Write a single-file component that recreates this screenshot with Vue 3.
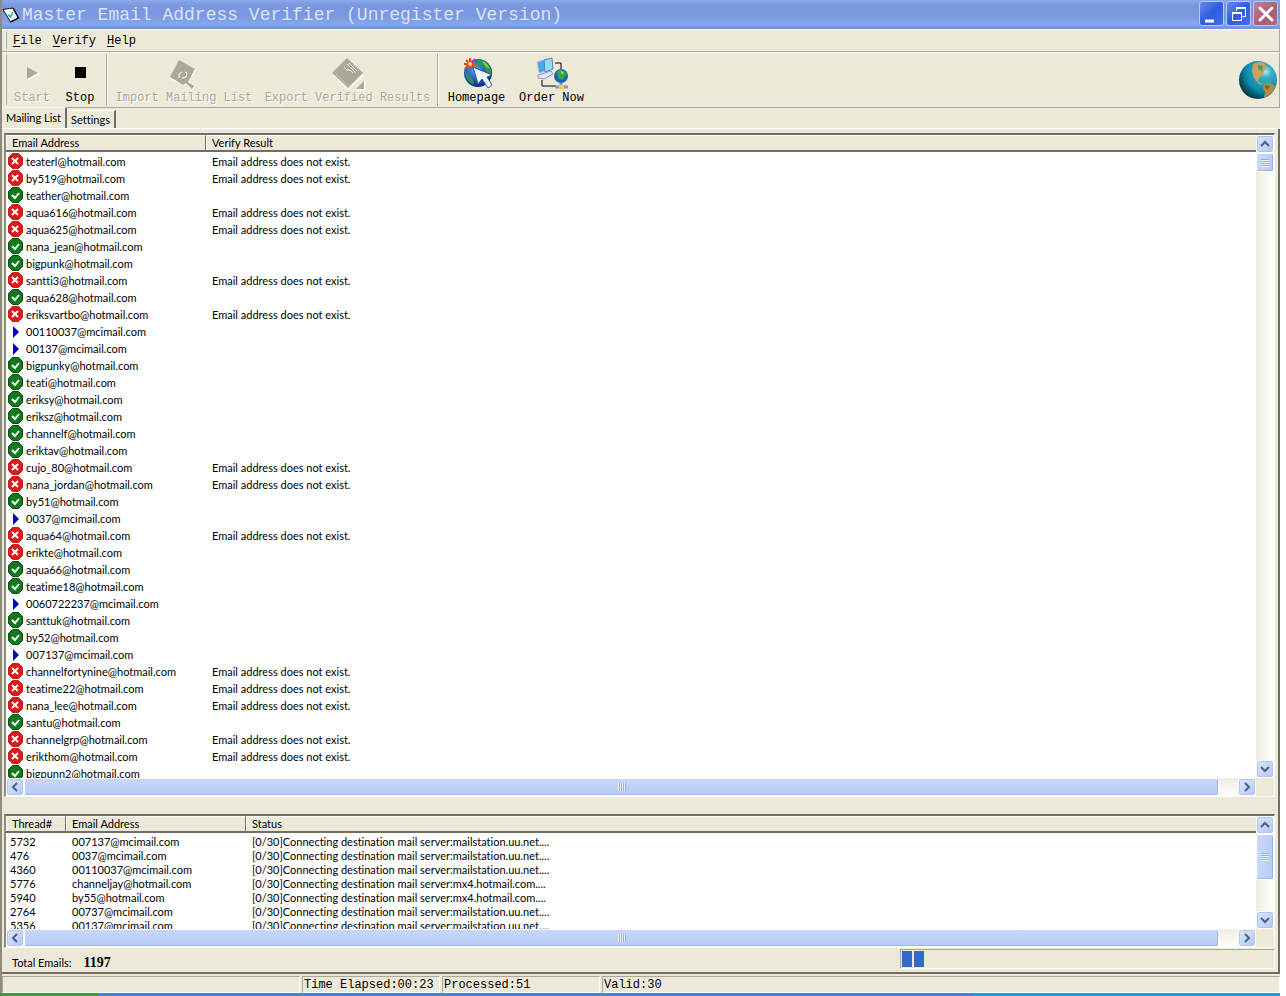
<script setup>
const bad = 'Email address does not exist.'
const src = `x teaterl@hotmail.com
x by519@hotmail.com
v teather@hotmail.com
x aqua616@hotmail.com
x aqua625@hotmail.com
v nana_jean@hotmail.com
v bigpunk@hotmail.com
x santti3@hotmail.com
v aqua628@hotmail.com
x eriksvartbo@hotmail.com
p 00110037@mcimail.com
p 00137@mcimail.com
v bigpunky@hotmail.com
v teati@hotmail.com
v eriksy@hotmail.com
v eriksz@hotmail.com
v channelf@hotmail.com
v eriktav@hotmail.com
x cujo_80@hotmail.com
x nana_jordan@hotmail.com
v by51@hotmail.com
p 0037@mcimail.com
x aqua64@hotmail.com
x erikte@hotmail.com -
v aqua66@hotmail.com
v teatime18@hotmail.com
p 0060722237@mcimail.com
v santtuk@hotmail.com
v by52@hotmail.com
p 007137@mcimail.com
x channelfortynine@hotmail.com
x teatime22@hotmail.com
x nana_lee@hotmail.com
v santu@hotmail.com
x channelgrp@hotmail.com
x erikthom@hotmail.com
v bigpunn2@hotmail.com`
const emails = src.split('\n').map((line) => {
  const [state, address, silent] = line.trim().split(' ')
  return { state, address, result: state === 'x' && !silent ? bad : '' }
})
const station = '[0/30]Connecting destination mail server:mailstation.uu.net....'
const mx4 = '[0/30]Connecting destination mail server:mx4.hotmail.com....'
const threads = [
  { id: '5732', address: '007137@mcimail.com', status: station },
  { id: '476', address: '0037@mcimail.com', status: station },
  { id: '4360', address: '00110037@mcimail.com', status: station },
  { id: '5776', address: 'channeljay@hotmail.com', status: mx4 },
  { id: '5940', address: 'by55@hotmail.com', status: mx4 },
  { id: '2764', address: '00737@mcimail.com', status: station },
  { id: '5356', address: '00137@mcimail.com', status: station },
]
const chevrons = {
  up: 'M4 10l4-4 4 4',
  down: 'M4 6l4 4 4-4',
  left: 'M10 4l-4 4 4 4',
  right: 'M6 4l4 4-4 4',
}
</script>

<template>
  <div class="screen">
    <div class="window">
      <header class="title">
        <svg class="app-icon" width="18" height="20" viewBox="0 0 18 20">
          <path d="M1 5.500l10-1.500 5.500 10-8 4z" fill="#fff" stroke="#101820" stroke-width="1" />
          <path d="M11 4l5.500 10-8 4" fill="none" stroke="#101820" stroke-width="1.500" />
          <path d="M6 10.500l2.500 2.500 2.500-5" fill="none" stroke="#2a9fd8" stroke-width="1.600" />
        </svg>
        <h1>Master Email Address Verifier (Unregister Version)</h1>
        <button class="cap" aria-label="Minimize">
          <svg width="22" height="22" viewBox="0 0 22 22"><path d="M4 18h9" stroke="#fff" stroke-width="3" /></svg>
        </button>
        <button class="cap" aria-label="Restore">
          <svg width="22" height="22" viewBox="0 0 22 22" fill="none" stroke="#fff">
            <path d="M8.500 8V5.500h9v8h-3" /><path d="M8 5h10" stroke-width="2" />
            <path d="M4.500 9.500h9v8h-9z" /><path d="M4 10h10" stroke-width="2" />
          </svg>
        </button>
        <button class="cap close" aria-label="Close">
          <svg width="22" height="22" viewBox="0 0 22 22"><path d="M5 5l12 12M17 5L5 17" stroke="#fff" stroke-width="3" stroke-linecap="round" /></svg>
        </button>
      </header>

      <nav class="menu">
        <span class="grip"></span>
        <button><u>F</u>ile</button>
        <button><u>V</u>erify</button>
        <button><u>H</u>elp</button>
      </nav>

      <div class="toolbar">
        <span class="grip"></span>
        <button class="tool w48" disabled>
          <svg width="36" height="36" viewBox="0 0 36 36"><path d="M14 12l12 6-12 6z" fill="#fff" /><path d="M13 11l11 6-11 6z" fill="#aca899" /></svg>
          <span>Start</span>
        </button>
        <button class="tool w48">
          <svg width="36" height="36" viewBox="0 0 36 36"><path d="M13 11h11v11H13z" /></svg>
          <span>Stop</span>
        </button>
        <span class="sep"></span>
        <button class="tool w152" disabled>
          <svg width="36" height="36" viewBox="0 0 36 36">
            <path d="M14 5l16 9-7 12 6 5-2 3-6-6-3 2-14-7z" fill="#fff" />
            <path d="M13 4l16 9-7 13 6 4-2 3-6-6-3 2-13-8z" fill="#aca899" />
            <path d="M13 22v-4l3-2M16 22l4-1 1-4-2-1" fill="none" stroke="#fff" />
          </svg>
          <span>Import Mailing List</span>
        </button>
        <button class="tool w175" disabled>
          <svg width="36" height="36" viewBox="0 0 36 36">
            <path d="M27 34l8-9v9z" fill="#fff" stroke="#fff" />
            <path d="M3 18l15 15 15-14" fill="none" stroke="#fff" stroke-width="2" />
            <path d="M17 2l16 15-15 15L2 17z" fill="#aca899" />
            <path d="M26 33l8-8v8z" fill="#aca899" />
            <path d="M14 11l3 3h3l3 3M17 8l9 9M19 7l8 8M22 6l6 6" fill="none" stroke="#f4f2e6" />
            <path d="M6 18l12 12" stroke="#c8c4b4" />
          </svg>
          <span>Export Verified Results</span>
        </button>
        <span class="sep"></span>
        <button class="tool w75">
          <svg width="36" height="36" viewBox="0 0 36 36">
            <defs>
              <radialGradient id="earth" cx="40%" cy="35%" r="65%">
                <stop offset="0" stop-color="#4aa4f0" /><stop offset=".6" stop-color="#1a5cc4" /><stop offset="1" stop-color="#0c2c7c" />
              </radialGradient>
            </defs>
            <circle cx="19" cy="17" r="14" fill="url(#earth)" />
            <path d="M18 4q9-1 13 7 2 4 1 9l-5-5-3-6-5 2z" fill="#2a9c3c" />
            <path d="M23 5q6 2 8 8l-4-2z" fill="#7cc850" />
            <path d="M6 15q5 3 8 9l1 5q-9-4-9-14z" fill="#2f8c58" />
            <path d="M11 2v12M5 8h13M7 4l9 9M16 3l-10 10" stroke="#e2452a" stroke-width="2" />
            <circle cx="11" cy="8" r="2" fill="#ffe08a" />
            <path d="M14 11l5 17 4-5 6 9 4-3-5-8 5-2z" fill="#eef4ff" stroke="#37588c" />
          </svg>
          <span>Homepage</span>
        </button>
        <button class="tool w75">
          <svg width="36" height="36" viewBox="0 0 36 36">
            <path d="M21 7h6v6M8 24v6h14" fill="none" stroke="#000" />
            <path d="M4 19l13-4 2 3-9 5-6-1z" fill="#e2e4f2" stroke="#9098b8" />
            <path d="M3 6l10-3 2 11-10 3z" fill="#48a8ec" stroke="#b8c4e4" />
            <path d="M10 4l8-2 1 11-8 3z" fill="#8cdcfc" stroke="#647fb8" />
            <circle cx="27" cy="20" r="7" fill="#1c62b8" />
            <path d="M23 15q6-3 10 3-2 2-4 6-4 0-5-3z" fill="#35a445" />
            <path d="M26 15l4 1-2 3z" fill="#8cd46c" />
            <path d="M21 31h13M27 27v4" stroke="#8c9ab8" stroke-width="3" />
            <path d="M25 29h5v4h-5z" fill="#f0cf50" />
          </svg>
          <span>Order Now</span>
        </button>
        <svg class="globe" width="38" height="38" viewBox="0 0 38 38">
          <defs>
            <radialGradient id="sea" cx="70%" cy="28%" r="80%">
              <stop offset="0" stop-color="#a8ecf2" /><stop offset=".2" stop-color="#35b0c8" /><stop offset=".65" stop-color="#0a8aa8" /><stop offset="1" stop-color="#04303c" />
            </radialGradient>
          </defs>
          <circle cx="19" cy="19" r="19" fill="url(#sea)" />
          <path d="M14 3q5-3 11-1l3 5-3 3-2 5-3 2-1 3 3 2 3 2-5-1-5-6-2-7z" fill="#c8a25c" />
          <path d="M19 4l5 1-1 5-4-2z" fill="#4b9a6a" />
          <path d="M25 23l6-1 5 3-2 5-5 5-4 2 1-6-2-4z" fill="#b98740" /><path d="M26 24l5 1-2 4-3-2z" fill="#5a7a38" />
        </svg>
      </div>

      <div class="tabs" role="tablist">
        <button class="tab on" role="tab" aria-selected="true">Mailing List</button>
        <button class="tab" role="tab" aria-selected="false">Settings</button>
      </div>

      <main class="page">
        <section class="list mail">
          <div class="view">
            <table>
              <colgroup><col class="c200" /><col /></colgroup>
              <thead><tr><th>Email Address</th><th>Verify Result</th></tr></thead>
              <tbody>
                <tr v-for="m in emails" :key="m.address">
                  <td>
                    <div class="entry">
                      <svg width="17" height="17" viewBox="0 0 17 17">
                        <path v-if="m.state === 'p'" d="M6 3l6 6-6 6z" fill="#0000c8" />
                        <g v-else>
                          <path d="M5.500 .500h6l4 4v7l-4 4h-6l-4-4v-7z" stroke-linejoin="round" :fill="m.state === 'x' ? '#e01818' : '#0e7a1c'" :stroke="m.state === 'x' ? '#c02424' : '#0a4c10'" />
                          <path :d="m.state === 'x' ? 'M5 5l6 6M11 5l-6 6' : 'M5 8l3 3 4-5'" fill="none" stroke="#fff" stroke-width="2" />
                        </g>
                      </svg>
                      {{ m.address }}
                    </div>
                  </td>
                  <td>{{ m.result }}</td>
                </tr>
              </tbody>
            </table>
          </div>
          <div class="vbar">
            <button class="sb" aria-label="Scroll up"><svg width="16" height="16" viewBox="0 0 16 16"><path :d="chevrons.up" /></svg></button>
            <span class="thumb small"></span>
            <span class="fill"></span>
            <button class="sb" aria-label="Scroll down"><svg width="16" height="16" viewBox="0 0 16 16"><path :d="chevrons.down" /></svg></button>
          </div>
          <div class="hbar">
            <button class="sb" aria-label="Scroll left"><svg width="16" height="16" viewBox="0 0 16 16"><path :d="chevrons.left" /></svg></button>
            <span class="thumb"></span>
            <button class="sb" aria-label="Scroll right"><svg width="16" height="16" viewBox="0 0 16 16"><path :d="chevrons.right" /></svg></button>
          </div>
        </section>

        <section class="list jobs">
          <div class="view">
            <table>
              <colgroup><col class="c60" /><col class="c180" /><col /></colgroup>
              <thead><tr><th>Thread#</th><th>Email Address</th><th>Status</th></tr></thead>
              <tbody>
                <tr v-for="t in threads" :key="t.id">
                  <td>{{ t.id }}</td><td>{{ t.address }}</td><td>{{ t.status }}</td>
                </tr>
              </tbody>
            </table>
          </div>
          <div class="vbar">
            <button class="sb" aria-label="Scroll up"><svg width="16" height="16" viewBox="0 0 16 16"><path :d="chevrons.up" /></svg></button>
            <span class="thumb large"></span>
            <span class="fill"></span>
            <button class="sb" aria-label="Scroll down"><svg width="16" height="16" viewBox="0 0 16 16"><path :d="chevrons.down" /></svg></button>
          </div>
          <div class="hbar">
            <button class="sb" aria-label="Scroll left"><svg width="16" height="16" viewBox="0 0 16 16"><path :d="chevrons.left" /></svg></button>
            <span class="thumb"></span>
            <button class="sb" aria-label="Scroll right"><svg width="16" height="16" viewBox="0 0 16 16"><path :d="chevrons.right" /></svg></button>
          </div>
        </section>

        <div class="totals">
          <span>Total Emails:</span><b>1197</b>
          <div class="progress" role="progressbar" aria-label="Verification progress"><i></i><i></i></div>
        </div>
      </main>

      <footer class="status">
        <span class="s298"></span><span class="s138">Time Elapsed:00:23</span><span class="s158">Processed:51</span><span class="rest">Valid:30</span>
      </footer>
    </div>
    <div class="taskbar"><span></span><span></span><span></span></div>
  </div>
</template>

<style>
html, body { background: #fff; }
</style>
<style scoped>
* { box-sizing: border-box; }
button { font: inherit; color: inherit; background: none; border: 0; padding: 0; }
svg { display: block; flex: none; }
.screen { height: 100vh; padding-right: 6px; display: flex; flex-direction: column; font: 11px/14px Lato, "Liberation Sans", sans-serif; font-variant-ligatures: none; color: #000; overflow: hidden; }
.window { flex: 1; min-height: 0; display: flex; flex-direction: column; background: #ece9d8; border-left: 2px solid #8d8b7d; }
.title { height: 29px; flex: none; display: flex; align-items: center; gap: 2px; padding-right: 2px; background: linear-gradient(#8aa7e8 0, #7a96df 6px, #7b98e0 16px, #84a8ec 24px, #6f8fd4 29px); }
.app-icon { margin-bottom: 2px; }
h1 { flex: 1; margin: 0; font: 18px/24px "Liberation Mono", monospace; color: #d8e4f8; white-space: nowrap; }
.cap { width: 25px; height: 25px; margin-bottom: 2px; border: 1px solid #b4c8f4; border-radius: 3px; background: linear-gradient(135deg, #6a8cf0, #2f5ce0 50%, #4470ea); display: flex; align-items: center; justify-content: center; }
.close { background: linear-gradient(135deg, #c08098, #a85c70 60%, #b46c80); }
.menu, .toolbar, .status { font-family: "Liberation Mono", monospace; font-size: 12px; }
.menu { height: 23px; flex: none; display: flex; align-items: center; gap: 11px; padding: 0 3px; border-top: 1px solid #fff; border-bottom: 1px solid #aca899; border-right: 1px solid #aca899; }
.menu .grip { margin-right: -5px; }
u { text-underline-offset: 2px; }
.grip { width: 2px; align-self: stretch; margin: 2px 0; border-right: 1px solid #aca899; border-left: 1px solid #fff; }
.toolbar { height: 56px; flex: none; display: flex; align-items: center; padding: 0 2px; border-top: 1px solid #fff; border-bottom: 1px solid #aca899; border-right: 1px solid #aca899; }
.toolbar .grip { margin-left: 1px; margin-right: 1px; }
.tool { display: flex; flex-direction: column; align-items: center; white-space: nowrap; }
.tool span { line-height: 13px; }
.tool:disabled { color: #aca899; text-shadow: 1px 1px #fff; }
.w48 { width: 48px; } .w152 { width: 152px; } .w175 { width: 175px; } .w75 { width: 75px; }
.sep { width: 2px; align-self: stretch; margin: 1px 0 1px 2px; border-left: 1px solid #aca899; border-right: 1px solid #fff; }
.globe { margin-left: auto; }
.tabs { height: 21px; flex: none; display: flex; align-items: flex-end; border-bottom: 1px solid #fff; }
.tab { width: 49px; height: 18px; border-right: 2px solid #716f64; border-top: 1px solid #fff; white-space: nowrap; }
.tab.on { width: 65px; height: 21px; }
.page { flex: 1; min-height: 0; display: flex; flex-direction: column; padding: 4px 3px 2px 2px; border-right: 2px solid #716f64; border-bottom: 2px solid #716f64; }
.list { display: grid; grid-template-columns: 1fr 18px; grid-template-rows: 1fr 18px; border: 1px solid #fff; border-top: 2px solid #716f64; border-left: 2px solid #8d8b7d; background: #ece9d8; min-height: 0; }
.mail { flex: 1; margin-bottom: 17px; }
.jobs { height: 134px; flex: none; }
.view { overflow: hidden; background: #fff; min-height: 0; }
table { width: 100%; border-collapse: separate; border-spacing: 0; table-layout: fixed; }
.c200 { width: 200px; } .c60 { width: 60px; } .c180 { width: 180px; }
th { height: 17px; padding: 0 6px; text-align: left; font-weight: normal; line-height: 14px; background: #ece9d8; border-top: 1px solid #fff; border-bottom: 2px solid #716f64; border-right: 1px solid #716f64; box-shadow: inset 1px 0 #fff; }
th:last-child { border-right: 0; }
td { padding: 0 6px; white-space: nowrap; }
td:first-child { padding-left: 1px; }
.mail td { height: 17px; line-height: 17px; }
.mail tbody::before { content: ""; display: table-row; height: 1px; }
.entry { display: flex; gap: 2px; height: 17px; line-height: 17px; }
.jobs td { height: 14px; line-height: 14px; }
.jobs td:first-child { padding-left: 4px; }
.jobs tbody::before { content: ""; display: table-row; height: 2px; }
.vbar { background: linear-gradient(90deg, #eeede5, #fefefb); display: flex; flex-direction: column; align-items: center; }
.hbar { background: linear-gradient(#eeede5, #fefefb); display: flex; align-items: center; }
.fill { flex: 1; }
.sb { width: 18px; height: 18px; flex: none; border: 1px solid #fff; border-radius: 3px; background: linear-gradient(135deg, #dbe5fd, #b4c8f6); box-shadow: inset 0 0 0 1px #b0c4ee; }
.sb svg { fill: none; stroke: #4d6185; stroke-width: 2; }
.thumb { border: 1px solid #fff; border-radius: 2px; box-shadow: inset -1px -1px #9ab4e4; display: flex; align-items: center; justify-content: center; }
.vbar .thumb { width: 18px; background: linear-gradient(90deg, #cbd9fc, #b8cbf8); }
.small { height: 19px; } .large { height: 46px; }
.hbar .thumb { flex: 1; height: 18px; margin-right: 19px; background: linear-gradient(#c8d6fb, #b6cbf6); }
.thumb::after { content: ""; width: 8px; height: 8px; background: repeating-linear-gradient(#8cb0f0 0 1px, #eef4fe 1px 2px); }
.hbar .thumb::after { background: repeating-linear-gradient(90deg, #eef4fe 0 1px, #8cb0f0 1px 2px); }
.totals { flex: none; height: 22px; display: flex; align-items: flex-end; gap: 12px; padding-left: 8px; }
.totals b { font: bold 14px/14px "Liberation Serif", serif; }
.progress { width: 375px; height: 20px; align-self: center; margin-left: auto; display: flex; gap: 2px; padding: 1px; border: 1px solid #aca899; border-right-color: #fff; border-bottom-color: #fff; }
.progress i { width: 10px; background: #316ac5; }
.status { height: 19px; flex: none; display: flex; gap: 2px; padding-top: 2px; line-height: 16px; }
.status span { border: 1px solid #fff; border-top-color: #aca899; border-left-color: #aca899; padding-left: 1px; white-space: nowrap; }
.s298 { width: 298px; } .s138 { width: 138px; } .s158 { width: 158px; } .rest { flex: 1; }
.taskbar { height: 3px; flex: none; display: flex; background: #3c81dc; }
.taskbar span:first-child { width: 97px; background: #3f9a3f; }
.taskbar span:nth-child(2) { flex: 1; }
.taskbar span:last-child { width: 24%; background: #1a9fe0; }
</style>
